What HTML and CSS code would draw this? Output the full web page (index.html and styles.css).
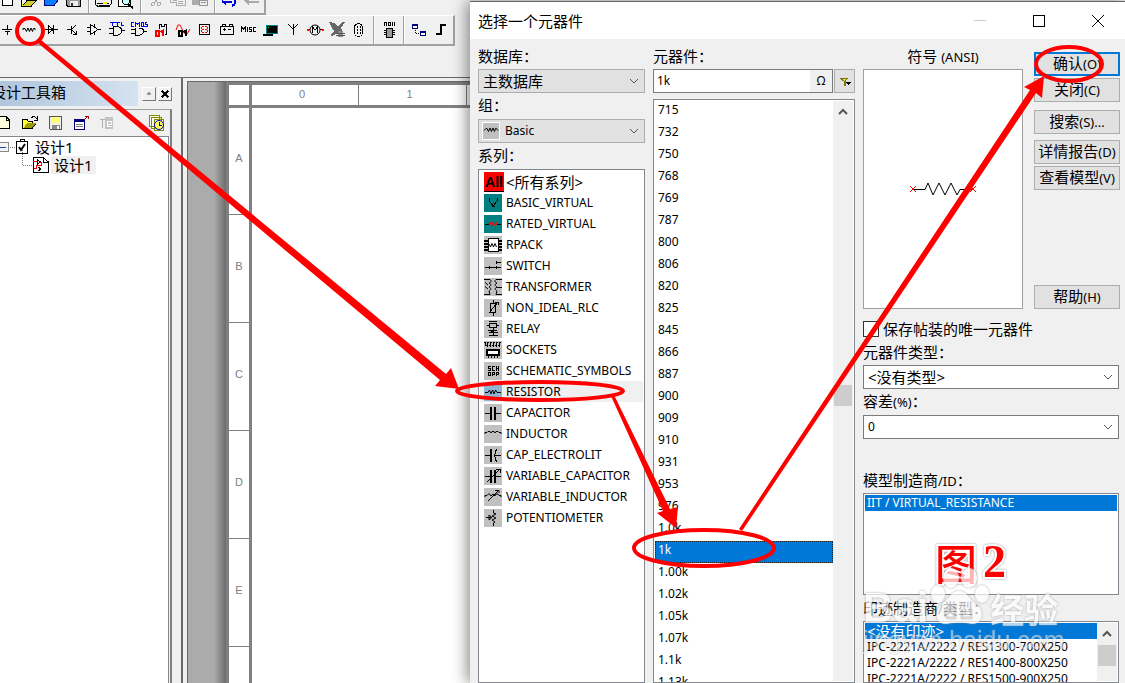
FILE: index.html
```html
<!DOCTYPE html>
<html lang="zh-CN">
<head>
<meta charset="utf-8">
<title>选择一个元器件</title>
<link rel="stylesheet" href="styles.css">
</head>
<body>
<main class="app">
  <nav class="toolbar toolbar-std" aria-label="标准">
    <svg class="ic" viewBox="0 0 16 8"><path d="M2.5-2V5.500H12.500V-2" fill="#fff" stroke="#000"/></svg>
    <svg class="ic" viewBox="0 0 16 8"><path d="M-.5-2V6.500H9L14 .5H5L1 6" fill="#ff3" stroke="#000"/><path d="M5 1H13L9 6H1Z" fill="#cc3"/></svg>
    <svg class="ic" viewBox="0 0 16 8"><path d="M.5-1V5.500H10L15-1Z" fill="#0a7cff" stroke="#000080"/></svg>
    <svg class="ic" viewBox="0 0 16 8"><path d="M.5-2V5L2 6.500H14V-2" fill="#999" stroke="#000"/><path d="M4 1h8v5H4z" fill="#eee"/><path d="M5 3h2v3H5z" fill="#333"/></svg>
    <span class="sep"></span>
    <svg class="ic" viewBox="0 0 16 8"><path d="M-.5-1V4.500L2 6.500H13L15 4V-1Z" fill="#eee" stroke="#000"/><path d="M1 3H13M3 5H14" stroke="#000"/><path d="M7 3h4" stroke="#fe0" stroke-width="2"/></svg>
    <svg class="ic" viewBox="0 0 16 8"><path d="M.5-2V6.500H12.500V-2" fill="#fff" stroke="#000"/><circle cx="8" cy="1" r="3.500" fill="#bff" stroke="#000"/><path d="M10 4L15 8" stroke="#000" stroke-width="2"/></svg>
    <span class="sep"></span>
    <svg class="ic" viewBox="0 0 16 8"><g fill="none" stroke="#aaa"><path d="M6-1L10 3M10-1L6 3"/><circle cx="5" cy="4" r="1.500"/><circle cx="11" cy="4" r="1.500"/></g></svg>
    <svg class="ic" viewBox="0 0 16 8"><path d="M.5-2V2.500H6V5.500H15V-2M3 0h4M8 1h5M8 3h5" fill="none" stroke="#aaa"/></svg>
    <svg class="ic" viewBox="0 0 16 8"><path d="M0-1H9V5H0Z" fill="#aaa"/><path d="M7.500.5H15.500V5.500H7.500Z" fill="#eee" stroke="#999"/><path d="M9 2.500h5" stroke="#999"/></svg>
    <span class="sep"></span>
    <svg class="ic" viewBox="0 0 16 8"><path d="M0 1.500H10M10-2C15 1 14 4 10 6M0 1L4 4" fill="none" stroke="#00d" stroke-width="2"/></svg>
    <svg class="ic" viewBox="0 0 16 8"><path d="M0 0L5-4V6Z" fill="#aaa"/><path d="M3 2H15" stroke="#aaa" stroke-width="2"/></svg>
  </nav>
  <nav class="toolbar toolbar-parts" aria-label="元器件">
    <svg class="ic" viewBox="0 0 16 16"><path d="M8.500 3V7M3 7.500H13M6 9.500H11M8.500 9V13" stroke="#000" fill="none"/></svg>
    <svg class="ic soft" viewBox="0 0 16 16"><path d="M2 8V6.500H4L5.500 9.500L7 6L8.500 9.500L10 6L11.500 9.500L12.500 6.500H14V8" stroke="#000" fill="none"/></svg>
    <svg class="ic" viewBox="0 0 16 16"><path d="M2 7.500H15M5.500 3.500V11.500L10 7.500ZM10.500 3V12" stroke="#000" fill="none"/></svg>
    <svg class="ic" viewBox="0 0 16 16"><path d="M2 7.500H6M6.500 4V12M6 8L11 3M6 7L11 12M11.500 9V12.500H8" stroke="#000" fill="none"/></svg>
    <svg class="ic" viewBox="0 0 16 16"><path d="M0 5.500H3M0 9.500H3M3.500 2.500V12.500L11 7.500ZM11 7.500H14M7 2V5M7 10V13" stroke="#000" fill="none"/></svg>
    <svg class="ic" viewBox="0 0 16 16"><path d="M0 6.500H4M0 11.500H4M4.500 4.500V13.500H8C14 12 14 5 8 4.500ZM12 8.500H16" stroke="#000" fill="none"/><path d="M1 .5H6M3.500 0V4M6 .5H11M8.500 0V4M12.500 0V3.500H15" stroke="#00f" fill="none"/></svg>
    <svg class="ic" viewBox="0 0 16 16"><path d="M0 7.500H4M0 11.500H4M4.500 6V13.500H8C14 12 14 6 8 6M12 9.500H16" stroke="#000" fill="none"/><path d="M3 .5H.5V4.500H3M4.500 5V.5L6.500 2L8.500.5V5M10.500.5H12.500V4.500H10.500ZM16 .5H14V2.500H16V4.500H13" stroke="#00f" fill="none"/></svg>
    <svg class="ic" viewBox="0 0 16 16"><path d="M6.500 7V2.500H8.500V4.500H11.500V2.500H13.500V12.500H12" stroke="#000" fill="none"/><path d="M3 9H5.500V13.500H2.500V9ZM10 14V8.500L7.500 10" stroke="#f00" stroke-width="2" fill="none"/></svg>
    <svg class="ic" viewBox="0 0 16 16"><path class="soft" d="M1 8L3 3H5L9 11L12 12L15 7" stroke="#f00" fill="none"/><path d="M4 9H6.500V13.500H3.500V9ZM11 14V8.500L8.500 10" stroke="#000" stroke-width="2" fill="none"/></svg>
    <svg class="ic" viewBox="0 0 16 16"><path d="M2.500 2.500H12.500V12.500H2.500Z" stroke="#000" fill="none"/><path d="M5 4.500H10M5 7.500H10M5 10.500H10M4.500 5V10M10.500 5V10" stroke="#f00" stroke-dasharray="2 1" fill="none"/></svg>
    <svg class="ic" viewBox="0 0 16 16"><path d="M1.500 4.500H14.500V12.500H1.500ZM3 4V2.500H6V4M10 4V2.500H13V4M4 7.500H7M5.500 6V9M9 7.500H12" stroke="#000" fill="none"/></svg>
    <svg class="ic" viewBox="0 0 16 16"><path d="M.5 10V5L2.500 7L4.500 5V10M6.500 5V10M11 5.500H8.500V7.500H10.500V9.500H8M15 5.500H12.500V9.500H15" stroke="#000" fill="none"/></svg>
    <svg class="ic" viewBox="0 0 16 16"><path d="M3 3.500H14.500V11.500H3Z" fill="#000" stroke="#088"/><path d="M0 12.500H10" stroke="#000" stroke-width="2"/><path d="M5 5h1v1H5z" fill="#0f0"/></svg>
    <svg class="ic" viewBox="0 0 16 16"><path d="M3 2L8 7L13 2M8.500 2V13" stroke="#000" fill="none"/></svg>
    <svg class="ic" viewBox="0 0 16 16"><circle class="soft" cx="8" cy="8" r="5" stroke="#000" fill="none"/><path d="M1 7.500H3M13 7.500H15M5.500 11V5L8 8L10.500 5V11" stroke="#000" fill="none"/><path d="M0 7.500H1.500M15 7.500H16.500" stroke="#f00" stroke-width="2"/></svg>
    <svg class="ic" viewBox="0 0 16 16"><path d="M0 0L6 1L9 5L13 0H16L12 6L14 11L9 11L3 14L1 13L5 9L2 4Z" fill="#666"/><path d="M9 9h5v6H9z" fill="#888"/><path d="M7 11h9M7 13h9" stroke="#555"/></svg>
    <svg class="ic" viewBox="0 0 16 16"><rect x="3.500" y="1.500" width="8" height="13" rx="4" stroke="#000" fill="none"/><path d="M6.500 4V12M9.500 4V12" stroke="#000" stroke-dasharray="2 1"/></svg>
    <span class="sep"></span>
    <svg class="ic" viewBox="0 0 16 16"><path d="M5.500 6.500H11.500V15.500H5.500Z" fill="#999" stroke="#000"/><path d="M3 8.500h2M3 10.500h2M3 12.500h2M12 8.500h2M12 10.500h2M12 12.500h2M3.500 4V.5H5.500V4M7.500.5H9.500V3H7.500ZM11.500 0V3.500M13.500 0V4" stroke="#000" fill="none"/></svg>
    <span class="sep"></span>
    <svg class="ic" viewBox="0 0 16 16"><path d="M1.500 2.500H6.500V6.500H1.500ZM9.500 9.500H14.500V13.500H9.500Z" fill="#fff" stroke="#000080"/><path d="M1 2.500H7M9 9.500H15" stroke="#000080" stroke-width="2"/><path d="M4 8V11.500H9" stroke="#000" stroke-dasharray="1 1" fill="none"/></svg>
    <svg class="ic" viewBox="0 0 16 16"><path d="M3 12H8V3H13" fill="none" stroke="#000" stroke-width="2"/></svg>
  </nav>
  <div class="workspace">
    <aside class="toolbox">
      <header class="toolbox-head">
        <h2>设计工具箱</h2>
        <button class="mini" aria-label="收起"><svg viewBox="0 0 9 9"><path d="M1 6L4.500 2L8 6Z" fill="#999"/></svg></button>
        <button class="mini" aria-label="关闭"><svg viewBox="0 0 9 9"><path d="M1 1L8 8M8 1L1 8" stroke="#000" stroke-width="2"/></svg></button>
      </header>
      <div class="tree-pane">
        <div class="tree-tools">
          <svg class="ic" viewBox="0 0 16 16"><path d="M-2 1.500H6L9.500 5V13.500H-2" fill="#ffd" stroke="#000"/><path d="M6 1V5H10" fill="none" stroke="#000"/></svg>
          <svg class="ic" viewBox="0 0 16 16"><path d="M-3.500 13.500V4.500H1L2 6H6V8H10L6 13.500Z" fill="#ff3" stroke="#000"/><path d="M-2 13L1 8H10L6 13Z" fill="#990"/><path d="M5 3L8 1L11 4M11 1V5H8" fill="none" stroke="#000"/></svg>
          <svg class="ic" viewBox="0 0 16 16"><path d="M-2.500 1.500H9.500V14.500H-1.500L-2.500 13Z" fill="#eee" stroke="#555"/><path d="M0 2H8V8H0Z" fill="#ff7"/><path d="M0 10H8V14H0Z" fill="#888"/><path d="M5 11h2v3H5z" fill="#fff"/></svg>
          <svg class="ic" viewBox="0 0 16 16"><path d="M-3.500 4.500H6.500V14.500H-3.500Z" fill="#fff" stroke="#000080"/><path d="M-4 5.500H7" stroke="#000080" stroke-width="3"/><path d="M-2 9.500H5M-2 11.500H5" stroke="#777"/><path d="M6 5L10 1M7 1H10V4" stroke="#900" fill="none"/></svg>
          <svg class="ic" viewBox="0 0 16 16"><path d="M1 2H9V14H1Z" fill="#c4c4c4"/><path d="M-4 4.500H1M-1.500 4V13" stroke="#b0b0b0" fill="none"/><path d="M3 9.500H7.500V6.500H3.500V11.500H7.500" stroke="#fff" fill="none"/></svg>
          <svg class="ic ic-last" viewBox="0 0 16 16"><path d="M.5.5H10.500V11H.5ZM2.500 2.500H12.500V13H2.500ZM5.500 4.500H14.500V15H5.500Z" fill="#ffe" stroke="#880"/><circle class="soft" cx="10" cy="10" r="4.500" fill="#ff5" stroke="#00a"/><path d="M10 7V10.500H13" stroke="#00a" fill="none"/></svg>
        </div>
        <ul class="tree">
          <li><svg class="twig" viewBox="0 0 16 18"><path d="M-4 4.500H8V13.500H-4" fill="#f4f4f4" stroke="#888"/><path d="M-2 9H6" stroke="#24a"/><path d="M10 9.500H15" stroke="#777" stroke-dasharray="1 1"/></svg><svg class="leaf" viewBox="0 0 16 18"><path d="M.5 3.500H11.500V15.500H.5ZM4 3V1.500H8V3" fill="#fff" stroke="#000"/><path class="soft" d="M3 9L5 12L9 6" fill="none" stroke="#000" stroke-width="2"/></svg><span>设计1</span></li>
          <li class="child"><svg class="twig" viewBox="0 0 16 18"><path d="M5.500-6V9.500H16" stroke="#777" stroke-dasharray="1 1" fill="none"/></svg><svg class="leaf" viewBox="0 0 16 18"><path d="M.5 1.500H10L15.500 6V16.500H.5Z" fill="#fff" stroke="#000"/><path d="M10 2V6H15M4.500 4L8 6L4.500 8ZM5 11L8 13L5 15" fill="none" stroke="#000"/><path d="M0 5.500H4M1 12.500H3.500V9.500H8.500V6H7" fill="none" stroke="#f00"/></svg><span class="current">设计1</span></li>
        </ul>
      </div>
    </aside>
    <section class="canvas" aria-label="图纸">
      <div class="sheet">
        <div class="corner"></div>
        <div class="ruler-x"><span>0</span><span>1</span><span></span></div>
        <div class="ruler-y"><span>A</span><span>B</span><span>C</span><span>D</span><span>E</span><span></span></div>
        <div class="paper"></div>
      </div>
    </section>
  </div>
</main>

<section class="dialog" role="dialog" aria-labelledby="dlg-title">
  <header class="titlebar">
    <h1 id="dlg-title">选择一个元器件</h1>
    <button aria-label="最小化"><svg viewBox="0 0 12 12"><path d="M0 5.500H12" stroke="#ccc"/></svg></button>
    <button aria-label="最大化"><svg viewBox="0 0 12 12"><path d="M.5.500H11.500V11.500H.5Z" stroke="#000" fill="none"/></svg></button>
    <button aria-label="关闭"><svg class="soft" viewBox="0 0 12 12"><path d="M0 0L12 12M12 0L0 12" stroke="#000"/></svg></button>
  </header>
  <div class="columns">
    <div class="col">
      <label class="cap" for="db">数据库：</label>
      <div class="combo grey"><select id="db" class="cjk"><option>主数据库</option></select><svg class="chev" viewBox="0 0 10 6"><path d="M1 1L5 5L9 1"/></svg></div>
      <label class="cap" for="grp">组：</label>
      <div class="combo grey with-icon"><select id="grp"><option>Basic</option></select><svg class="tag" viewBox="0 0 18 18"><path d="M.5.500H17.500V17.500H.5Z" fill="#c0c0c0" stroke="#fff"/><path class="soft" d="M2 8.500L4 6.500H5L6.500 9.500L8 6L9.500 9.500L11 6L12.500 9.500L13.500 6.500H14.500L16 8.500" fill="none" stroke="#000"/></svg><svg class="chev" viewBox="0 0 10 6"><path d="M1 1L5 5L9 1"/></svg></div>
      <span class="cap" id="fam">系列：</span>
      <ul class="box families" role="listbox" aria-labelledby="fam">
        <li role="option"><b class="all">All</b><span class="cjk">&lt;所有系列&gt;</span></li>
        <li role="option"><svg class="pi teal" viewBox="0 0 18 18"><path d="M5.500 4V7L9 12L13 7V4M8 12H11"/></svg>BASIC_VIRTUAL</li>
        <li role="option"><svg class="pi teal" viewBox="0 0 18 18"><path d="M1 9.500H5M13 9.500H17"/><path class="red soft" d="M5 9L6 7L7.500 11L9 7L10.500 11L12 7L13 10"/></svg>RATED_VIRTUAL</li>
        <li role="option"><svg class="pi" viewBox="0 0 18 18"><path d="M4 2.500H14V15.500H4Z" fill="#fff"/><path d="M0 4.500H4M0 7.500H4M0 10.500H4M0 13.500H4M14 4.500H18M14 7.500H18M14 10.500H18M14 13.500H18" stroke-width="2"/><path class="soft" d="M5 8L6.500 11L8 7.500L9.500 11L11 7.500L12.500 11"/></svg>RPACK</li>
        <li role="option"><svg class="pi" viewBox="0 0 18 18"><path d="M1 10.500H17M5 9V12M12 9V12M12 5.500H17M12.500 4V7"/></svg>SWITCH</li>
        <li role="option"><svg class="pi" viewBox="0 0 18 18"><path class="soft" d="M0 1.500H6C9 4 5 5 5 5C9 7 5 9 5 9C9 11 5 13 5 13L6 16.500H0M18 1.500H12C9 4 13 5 13 5C9 7 13 9 13 9C9 11 13 13 13 13L12 16.500H18M13 9.500H18M1 4.500L4 7M1 8.500L4 11"/></svg>TRANSFORMER</li>
        <li role="option"><svg class="pi" viewBox="0 0 18 18"><path d="M6.500 4.500H11.500V13.500H6.500ZM9.500 1V4M9.500 14V17M5 14L14 3M11 3H14V6"/></svg>NON_IDEAL_RLC</li>
        <li role="option"><svg class="pi" viewBox="0 0 18 18"><path d="M5 1.500H13M5.500 3.500H12.500V7.500H5.500ZM3 5.500H6M12 5.500H15M9 8V10M4 10.500H13M5 13L10 11M5 12.500H14M5 15.500H14M9 13V16"/></svg>RELAY</li>
        <li role="option"><svg class="pi" viewBox="0 0 18 18"><path d="M3 8.500H15V13.500H3Z" fill="#fff" stroke-width="2"/><path d="M1 1V5M3.500 1V6M6.500 1V6M9.500 1V6M12.500 1V6M15.500 1V6M4.500 14V17M7.500 14V17M10.500 14V17M13.500 14V17"/><path d="M0 1.500H17M2 4.500H16" stroke-dasharray="2 1"/></svg>SOCKETS</li>
        <li role="option"><svg class="pi" viewBox="0 0 18 18"><path d="M7 4.500H4.500V6.500H6.500V8.500H4M11 4.500H8.500V8.500H11M12.500 4V9M14.500 4V9M12 6.500H15M4.500 10.500H6.500V13.500H4.500ZM8.500 14V10.500H10.500V12.500H8M12.500 14V10.500H14.500V12.500H12"/></svg>SCHEMATIC_SYMBOLS</li>
        <li role="option" aria-selected="true" class="hover"><svg class="pi blue" viewBox="0 0 18 18"><path class="soft" d="M1 9.500H4L5.500 7L7 11L8.500 7L10 11L11.500 7L13 9.500H17"/></svg>RESISTOR</li>
        <li role="option"><svg class="pi" viewBox="0 0 18 18"><path d="M1 9.500H7M11 9.500H17"/><path d="M7 3V16M11 3V16" stroke-width="2"/></svg>CAPACITOR</li>
        <li role="option"><svg class="pi" viewBox="0 0 18 18"><path class="soft" d="M1 9V7.500H3L4 6.500H6L7 8L8 6.500H10L11 8L12 6.500H14L15 7.500H17V9"/></svg>INDUCTOR</li>
        <li role="option"><svg class="pi" viewBox="0 0 18 18"><path d="M1 9.500H7M11 9.500H17M13 3C10 6 10 13 13 16"/><path d="M7 3V16" stroke-width="2"/></svg>CAP_ELECTROLIT</li>
        <li role="option"><svg class="pi" viewBox="0 0 18 18"><path d="M1 9.500H7M11 9.500H17M3 15L15 3M12 2.500H16V6"/><path d="M7 3V16M11 3V16" stroke-width="2"/></svg>VARIABLE_CAPACITOR</li>
        <li role="option"><svg class="pi" viewBox="0 0 18 18"><path class="soft" d="M1 9V7.500H3L5 5.500L7 8L9 6L11 8L12 6H14L15 7.500H17V9M4 13L14 3M11 2.500H15V5"/></svg>VARIABLE_INDUCTOR</li>
        <li role="option"><svg class="pi" viewBox="0 0 18 18"><path class="soft" d="M9.500 1V4L12 5L8 7L12 9L8 11L11 13L9.500 14V17M2 8.500H7M5 6V11L8 8.500Z"/></svg>POTENTIOMETER</li>
      </ul>
    </div>
    <div class="col">
      <label class="cap" for="part">元器件：</label>
      <div class="search">
        <div class="field"><input id="part" value="1k"><button class="omega" aria-label="符号">Ω</button></div>
        <button class="filter" aria-label="筛选"><svg viewBox="0 0 12 10"><path d="M1 2H9L6 5V9H5V5Z" fill="#dd5" stroke="#770"/><path d="M7 6H12L9 9Z" fill="#000"/></svg></button>
      </div>
      <div class="box scroller parts">
        <ul role="listbox" aria-label="元器件">
          <li>715</li><li>732</li><li>750</li><li>768</li><li>769</li><li>787</li><li>800</li><li>806</li><li>820</li><li>825</li><li>845</li><li>866</li><li>887</li><li>900</li><li>909</li><li>910</li><li>931</li><li>953</li><li>976</li><li>1.0k</li><li class="picked">1k</li><li>1.00k</li><li>1.02k</li><li>1.05k</li><li>1.07k</li><li>1.1k</li><li>1.13k</li>
        </ul>
        <div class="bar"><svg viewBox="0 0 10 6"><path d="M1 5L5 1L9 5"/></svg><i></i></div>
      </div>
    </div>
    <div class="col details">
      <div class="top">
        <div class="preview">
          <span class="cap center">符号&nbsp;<small>(ANSI)</small></span>
          <div class="symbol"><svg viewBox="0 0 66 16"><path d="M4 8.500H15L18 2L23 14L29 2L35 14L41 2L47 14L50 8.500H62" fill="none" stroke="#000"/><path d="M0 5L6 11M6 5L0 11M60 5L66 11M66 5L60 11" stroke="#f00"/></svg></div>
        </div>
        <div class="actions">
          <button class="primary">确认<small>(O)</small></button>
          <button>关闭<small>(C)</small></button>
          <button class="gap">搜索<small>(S)...</small></button>
          <button class="gap2">详情报告<small>(D)</small></button>
          <button>查看模型<small>(V)</small></button>
          <button class="last">帮助<small>(H)</small></button>
        </div>
      </div>
      <label class="check"><input type="checkbox">保存帖装的唯一元器件</label>
      <label class="cap type-cap" for="type">元器件类型：</label>
      <div class="combo"><select id="type" class="cjk"><option>&lt;没有类型&gt;</option></select><svg class="chev" viewBox="0 0 10 6"><path d="M1 1L5 5L9 1"/></svg></div>
      <label class="cap" for="tol">容差<small>(%)</small>：</label>
      <div class="combo"><select id="tol"><option>0</option></select><svg class="chev" viewBox="0 0 10 6"><path d="M1 1L5 5L9 1"/></svg></div>
      <span class="cap maker-cap" id="maker">模型制造商<small>/ID</small>：</span>
      <ul class="box makers" role="listbox" aria-labelledby="maker"><li class="picked">IIT / VIRTUAL_RESISTANCE</li></ul>
      <span class="cap" id="foot">印迹制造商<small>/</small>类型：</span>
      <div class="box scroller prints">
        <ul role="listbox" aria-labelledby="foot"><li class="picked cjk">&lt;没有印迹&gt;</li><li>IPC-2221A/2222 / RES1300-700X250</li><li>IPC-2221A/2222 / RES1400-800X250</li><li>IPC-2221A/2222 / RES1500-900X250</li></ul>
        <div class="bar"><svg viewBox="0 0 10 6"><path d="M1 5L5 1L9 5"/></svg><i></i><svg class="down" viewBox="0 0 10 6"><path d="M1 1L5 5L9 1"/></svg></div>
      </div>
    </div>
  </div>
</section>

<svg class="marks" viewBox="0 0 1125 683" aria-hidden="true">
  <g fill="none" stroke="#f00" stroke-width="4">
    <circle cx="30" cy="31" r="13"/>
    <ellipse cx="540" cy="391" rx="83" ry="9"/>
    <ellipse cx="704" cy="548" rx="70" ry="18"/>
    <ellipse cx="1069" cy="64" rx="33" ry="17"/>
  </g>
  <g fill="#f00">
    <path d="M38 43L41 40L446 374L451 368L459 389L435 386L440 380Z"/>
    <path d="M611 396L614 395L670 509L678 507L676 528L657 513L663 511Z"/>
    <path d="M739 529L742 531L1036 93L1042 98L1044 76L1024 87L1030 90Z"/>
  </g>
</svg>
<div class="figure-tag"><span>图</span><b>2</b></div>
<div class="watermark" aria-hidden="true">
  <div class="brand"><span>Bai</span><svg viewBox="0 0 60 60"><g fill="#fff"><ellipse cx="9" cy="28" rx="7" ry="9"/><ellipse cx="22" cy="12" rx="8" ry="10"/><ellipse cx="40" cy="12" rx="8" ry="10"/><ellipse cx="53" cy="28" rx="7" ry="9"/><path d="M30 25C38 25 40 33 48 39C56 45 54 59 42 58C34 56 27 56 18 58C6 59 5 46 12 39C20 33 22 25 30 25Z"/></g><path d="M26 38V52H20C15 52 15 43 20 43H26M33 43V52H42V43" fill="none" stroke="#ccc" stroke-width="3"/></svg><span>经验</span></div>
  <div class="site">jingyan.baidu.com</div>
</div>
</body>
</html>
```
FILE: styles.css
```css
* { box-sizing: border-box; }
body {
  margin: 0;
  height: 100vh;
  overflow: hidden;
  position: relative;
  background: #f0f0f0;
  color: #000;
  font: 12px/16px "Noto Sans", "Noto Sans CJK SC", sans-serif;
}
ul { list-style: none; margin: 0; padding: 0; }
h1, h2 { margin: 0; font-weight: 400; }
button, input, select { font: inherit; color: inherit; margin: 0; padding: 0; border: 0; border-radius: 0; background: none; }
small { font-size: 13px; }
svg { display: block; overflow: visible; shape-rendering: crispEdges; }
.soft { shape-rendering: auto; }
.cjk { font-size: 15px; }

.app { height: 100%; display: flex; flex-direction: column; }
.toolbar { display: flex; align-items: center; gap: 6px; align-self: flex-start; border-right: 2px solid #a0a0a0; border-bottom: 2px solid #a0a0a0; }
.toolbar-std { height: 15px; padding-right: 4px; align-items: flex-start; overflow: hidden; }
.toolbar-std .ic { height: 8px; }
.toolbar-parts { height: 31px; margin-left: -1px; padding-right: 4px; border-top: 1px solid #fff; }
.ic { width: 16px; height: 16px; flex: none; }
.sep { width: 2px; align-self: stretch; border-left: 1px solid #a0a0a0; background: #fff; }
.workspace { flex: 1; min-height: 0; margin-top: 31px; border-top: 1px solid #696969; display: flex; }

.toolbox { width: 183px; flex: none; padding: 3px 9px 0 0; border-right: 2px solid #696969; display: flex; flex-direction: column; overflow: hidden; }
.toolbox-head { display: flex; align-items: center; gap: 2px; height: 25px; }
.toolbox-head h2 { width: 139px; height: 25px; margin-right: 2px; text-indent: -9px; font-size: 15px; line-height: 22px; background: linear-gradient(90deg, #b0c6dd, #d5e2f0); white-space: nowrap; }
.mini { width: 14px; height: 14px; padding: 2px; border: 1px solid; border-color: #fff #777 #777 #fff; }
.mini svg { width: 8px; height: 8px; }
.tree-pane { flex: 1; margin-top: 3px; border-top: 1px solid #a0a0a0; border-right: 2px solid #808080; display: flex; flex-direction: column; }
.tree-tools { height: 26px; display: flex; align-items: center; gap: 10px; padding-right: 5px; }
.tree-tools .ic-last { margin-left: auto; }
.tree { flex: 1; margin-right: 1px; border-top: 1px solid #828790; border-right: 1px solid #828790; background: #fff; padding-top: 1px; font-size: 15px; line-height: 18px; }
.tree li { display: flex; }
.tree .child { padding-left: 17px; }
.twig, .leaf { width: 16px; height: 18px; }
.tree span { padding: 0 3px; }
.current { margin-left: 2px; background: #f0f0f0; }

.canvas { flex: 1; min-width: 0; margin: 3px 0 0 4px; padding-left: 38px; border: solid #696969; border-width: 1px 0 0 1px; background: linear-gradient(90deg, #ababab 26px, #6c6c6c 38px, #808080 38px); }
.sheet { height: 100%; padding: 3px 0 0 3px; display: grid; grid-template: 20px 1fr / 20px 1fr; gap: 3px; background: #808080; color: #808080; font: 11px/12px "Liberation Sans", sans-serif; overflow: hidden; }
.corner, .ruler-x, .ruler-y, .paper { background: #fff; }
.ruler-x, .ruler-y { display: flex; min-width: 0; min-height: 0; overflow: hidden; }
.ruler-y { flex-direction: column; }
.ruler-x span { flex: 0 0 108px; border-right: 1px solid #808080; padding: 3px 6px 0 0; text-align: center; }
.ruler-x span:first-child { flex-basis: 107px; }
.ruler-y span { flex: 0 0 108px; border-bottom: 1px solid #808080; padding-bottom: 6px; display: grid; place-items: center; }
.ruler-y span:first-child { flex-basis: 107px; }

.dialog { position: absolute; inset: 1px 0 0 470px; border-top: 1px solid #666; background: #f0f0f0; display: flex; flex-direction: column; box-shadow: -3px 0 14px rgba(0, 0, 0, .45); }
.titlebar { flex: none; height: 37px; padding-left: 8px; display: flex; align-items: center; gap: 5px; background: #fff; }
.titlebar h1 { flex: 1; font-size: 15px; line-height: 20px; }
.titlebar button { width: 54px; height: 36px; display: grid; place-items: center; }
.titlebar svg { width: 12px; height: 12px; }
.columns { flex: 1; min-height: 0; padding: 6px 6px 0 8px; display: grid; grid-template-columns: 167fr 202fr 256fr; grid-template-rows: 100%; gap: 8px; }
.col { min-width: 0; display: flex; flex-direction: column; }
.cap { display: block; flex: none; height: 24px; font-size: 15px; line-height: 22px; white-space: nowrap; }
.center { text-align: center; }

.combo { display: grid; flex: none; height: 24px; border: 1px solid #7a7a7a; background: #fff; align-items: center; }
.combo + .cap { height: 26px; line-height: 24px; }
.combo.grey { border-color: #adadad; background: #e1e1e1; }
.combo > * { grid-area: 1 / 1; }
.combo select { appearance: none; width: 100%; height: 20px; padding-left: 4px; }
.combo .chev { width: 10px; height: 6px; margin-right: 5px; justify-self: end; }
.chev path, .bar path { fill: none; stroke: #555; stroke-width: 1; shape-rendering: auto; }
.bar path { stroke-width: 2; }
.with-icon select { padding-left: 26px; }
.with-icon .tag { width: 18px; height: 18px; margin-left: 3px; }

.box { flex: 1; min-height: 0; overflow: hidden; border: 1px solid #828790; background: #fff; }
.box li { white-space: nowrap; }
.families { padding: 1px; }
.families li { height: 21px; padding-left: 4px; display: flex; align-items: center; gap: 4px; }
.families .hover { background: #f0f0f0; }
.all { width: 20px; height: 20px; margin: 0 -2px 0 0; background: #f00; border-bottom: 1px solid #000; font: bold 14px/20px "Liberation Sans", sans-serif; text-align: center; }
.pi { width: 18px; height: 18px; flex: none; background: #c0c0c0; }
.pi path { fill: none; stroke: #000; }
.pi path[fill] { fill: #fff; }
.pi .red { stroke: #f00; }
.teal { background: #008080; }
.blue { background: #90b4d4; }

.search { display: flex; height: 24px; gap: 1px; margin-bottom: 6px; flex: none; }
.field { flex: 1; min-width: 0; display: flex; border: 1px solid #7a7a7a; background: #fff; }
.field input { flex: 1; width: 0; min-width: 0; padding-left: 3px; }
.omega { width: 22px; background: #f0f0f0; }
.filter { width: 21px; flex: none; display: grid; place-items: center; border: 1px solid #adadad; background: #e1e1e1; }
.filter svg { width: 12px; height: 10px; }
.scroller { display: flex; padding: 1px; }
.scroller ul { flex: 1; min-width: 0; }
.parts li { height: 22px; padding-left: 3px; line-height: 18px; }
.picked { background: #0078d7; color: #fff; }
.parts .picked { border: 1px dotted #222; line-height: 16px; padding-left: 2px; }
.bar { width: 20px; flex: none; background: #f0f0f0; display: flex; flex-direction: column; align-items: center; padding-top: 8px; }
.bar svg { width: 10px; height: 6px; flex: none; }
.bar i { width: 18px; height: 21px; flex: none; background: #cdcdcd; }
.bar .down { margin-top: 16px; }
.parts .bar i { margin-top: 270px; }

.top { display: flex; gap: 11px; height: 264px; flex: none; margin-right: -1px; }
.preview { flex: 1; display: flex; flex-direction: column; }
.symbol { flex: 1; border: 1px solid #a0a0a0; background: #fff; display: grid; place-items: center; }
.symbol svg { width: 66px; height: 16px; shape-rendering: auto; }
.actions { width: 86px; padding-top: 7px; display: flex; flex-direction: column; gap: 2px; }
.actions button { height: 24px; flex: none; border: 1px solid #adadad; background: #e1e1e1; font-size: 15px; line-height: 18px; padding-bottom: 2px; white-space: nowrap; }
.actions .primary { border: 2px solid #0078d7; }
.actions .gap { margin-top: 6px; }
.actions .gap2 { margin-top: 4px; }
.actions .last { margin-top: auto; }
.check { margin-top: 12px; height: 16px; flex: none; display: flex; align-items: center; gap: 4px; font-size: 15px; line-height: 14px; white-space: nowrap; }
.check input { appearance: none; width: 16px; height: 16px; border: 1px solid #333; background: #fff; }
.type-cap { margin-top: 4px; }
.combo + .maker-cap { margin-top: 30px; height: 24px; line-height: 22px; }
.makers { flex: none; height: 102px; padding: 1px; }
.makers li, .prints li { height: 16px; padding-left: 2px; line-height: 16px; }
.makers + .cap { height: 26px; line-height: 26px; }
.prints .bar i { margin-top: 8px; }

.marks { position: absolute; left: 0; top: 0; width: 1125px; height: 683px; shape-rendering: auto; pointer-events: none; }
.figure-tag { position: absolute; left: 935px; top: 535px; display: flex; align-items: center; gap: 6px; color: #f00; font: 500 42px/50px "Noto Sans CJK SC", sans-serif; -webkit-text-stroke: 4px #fff; paint-order: stroke fill; filter: drop-shadow(0 0 1px #999); pointer-events: none; }
.figure-tag b { font: 700 46px/54px "Liberation Serif", serif; }
.watermark { position: absolute; left: 863px; top: 566px; color: #fff; opacity: .7; pointer-events: none; filter: drop-shadow(0 0 1px #888); }
.brand { display: flex; align-items: flex-end; gap: 1px; font: bold 34px/34px "Noto Sans CJK SC", sans-serif; }
.brand span:first-child { font: bold 42px/36px "Liberation Sans", sans-serif; }
.brand svg { width: 60px; height: 60px; shape-rendering: auto; }
.site { font: 25px/28px "Liberation Sans", sans-serif; opacity: .7; }
```
